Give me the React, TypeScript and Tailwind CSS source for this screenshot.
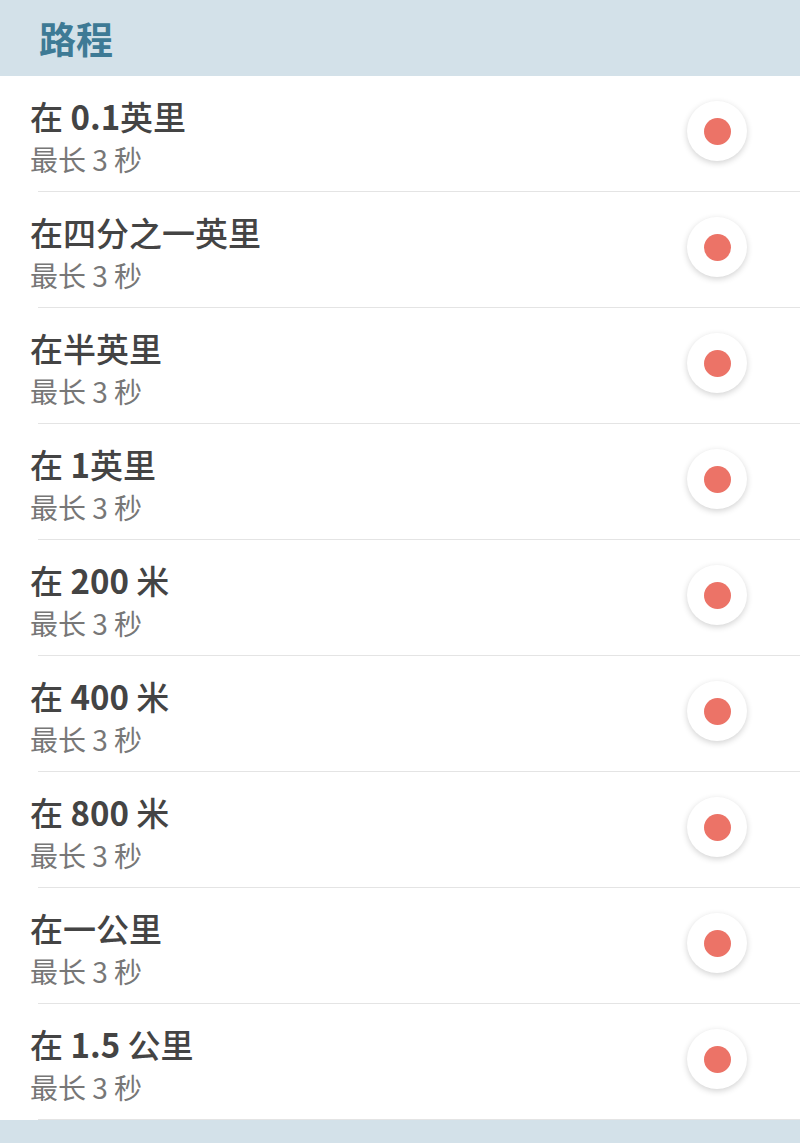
import React from "react";

const rows: React.ReactNode[] = [
  <>在 <b className="font-bold">0.1</b>英里</>,
  <>在四分之一英里</>,
  <>在半英里</>,
  <>在 <b className="font-bold">1</b>英里</>,
  <>在 <b className="font-bold">200</b> 米</>,
  <>在 <b className="font-bold">400</b> 米</>,
  <>在 <b className="font-bold">800</b> 米</>,
  <>在一公里</>,
  <>在 <b className="font-bold">1.5</b> 公里</>,
];

const RecordButton = () => (
  <div className="w-[60px] h-[60px] rounded-full bg-white shadow-[0_2px_6px_rgba(0,0,0,0.18)] flex items-center justify-center">
    <div className="w-[27px] h-[27px] rounded-full bg-[#ec7367]" />
  </div>
);

export default function App() {
  return (
    <div className="w-[800px] h-[1143px] bg-white flex flex-col font-['Noto_Sans_CJK_SC','Noto_Sans',sans-serif] overflow-hidden">
      <div className="h-[76px] bg-[#d3e1e9] flex items-center pl-[39px] shrink-0">
        <h1 className="text-[37px] leading-[44px] font-bold text-[#3e7a95]">路程</h1>
      </div>
      <div className="flex flex-col">
        {rows.map((label, i) => (
          <div key={i} className="h-[116px] relative flex items-center shrink-0">
            <div className="flex-1 flex flex-col pl-[30px] pt-[5px] self-stretch justify-center">
              <div className="text-[33px] leading-[40px] font-medium text-[#444]">{label}</div>
              <div className="text-[28px] leading-[36px] mt-[5px] text-[#777]">最长 3 秒</div>
            </div>
            <div className="pr-[53px] -mt-[6px]">
              <RecordButton />
            </div>
            <div className="absolute bottom-0 left-[38px] right-0 h-px bg-[#e4e4e4]" />
          </div>
        ))}
      </div>
      <div className="flex-1 bg-[#d3e1e9]" />
    </div>
  );
}
